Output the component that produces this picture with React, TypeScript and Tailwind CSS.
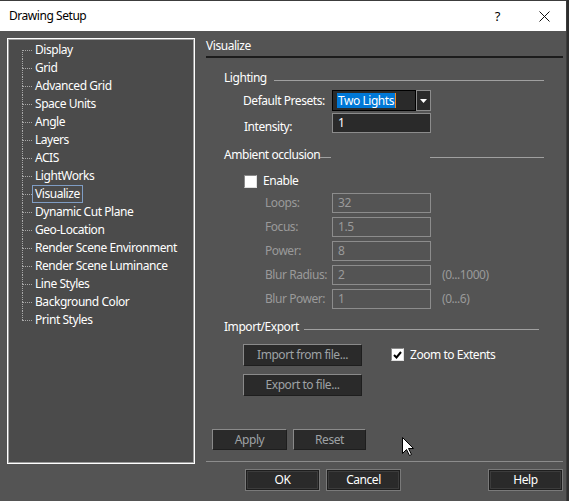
import React from "react";

const treeItems = [
  "Display",
  "Grid",
  "Advanced Grid",
  "Space Units",
  "Angle",
  "Layers",
  "ACIS",
  "LightWorks",
  "Visualize",
  "Dynamic Cut Plane",
  "Geo-Location",
  "Render Scene Environment",
  "Render Scene Luminance",
  "Line Styles",
  "Background Color",
  "Print Styles",
];

function TreeRow({ label, first, last, selected }: { label: string; first: boolean; last: boolean; selected: boolean }) {
  return (
    <div className="flex h-[18px] items-center">
      <div className="flex h-[18px] w-[10px] flex-col">
        <div className={`h-[9px] ${first ? "" : "border-l border-dotted border-[#a8a8a8]"}`} />
        <div
          className={`h-[9px] border-t border-dotted border-[#a8a8a8] ${last ? "" : "border-l"}`}
        />
      </div>
      <span
        className={`flex h-[18px] items-center border px-[2px] leading-none ${
          selected ? "border-[#7f9dc4]" : "border-transparent"
        }`}
      >
        {label}
      </span>
    </div>
  );
}

function Field({ value, disabled }: { value: string; disabled?: boolean }) {
  return (
    <div
      className={`flex h-[20px] w-[99px] items-center border border-[#8c8c8c] pl-[5px] ${
        disabled ? "bg-[#545454] text-[#9a9a9a]" : "bg-[#2a2a2a] text-white"
      }`}
    >
      {value}
    </div>
  );
}

function Btn({ label, w, dim, h = "h-[22px]" }: { label: string; w: string; dim?: boolean; h?: string }) {
  return (
    <div
      className={`flex ${h} ${w} items-center justify-center border border-t-[#8a8a8a] border-l-[#8a8a8a] border-r-[#1e1e1e] border-b-[#1e1e1e] bg-[#2a2a2a] ${
        dim ? "text-[#9ea2a5]" : "text-white"
      }`}
    >
      {label}
    </div>
  );
}

function MainBtn({ label, className = "" }: { label: string; className?: string }) {
  return (
    <div
      className={`flex h-[22px] w-[75px] items-center justify-center border border-[#7a7a7a] bg-[#1e1e1e] p-px text-white ${className}`}
    >
      <div className="flex h-full w-full items-center justify-center border border-[#3c3c3c] bg-[#2a2a2a]">
        {label}
      </div>
    </div>
  );
}

function RangeRow({ label, value, range }: { label: string; value: string; range?: string }) {
  return (
    <div className="mt-[4px] flex h-[20px] items-center pl-[59px]">
      <span className="w-[67px] text-[#9a9a9a]">{label}</span>
      <Field value={value} disabled />
      {range && <span className="ml-[11px] text-[#9a9a9a]">{range}</span>}
    </div>
  );
}

export default function App() {
  return (
    <div className="relative h-[501px] w-[569px] overflow-hidden whitespace-nowrap bg-[#2e2e2e] font-['Noto_Sans',sans-serif] text-[12px] leading-none tracking-[-0.45px]">
      <div className="flex h-[501px] w-[567px] flex-col border-t border-r border-[#3c3c3c] bg-[#545454]">
        {/* title bar */}
        <div className="flex h-[30px] items-center bg-white pl-[9px] text-black">
          <span>Drawing Setup</span>
          <span className="ml-auto mr-[39px] text-[13px]">?</span>
          <svg width="11" height="11" viewBox="0 0 11 11" className="mr-[16px]">
            <path d="M0.5 0.5 L10.5 10.5 M10.5 0.5 L0.5 10.5" stroke="#111" strokeWidth="1" />
          </svg>
        </div>

        <div className="flex pl-[7px] pt-[7px]">
          {/* tree */}
          <div className="h-[426px] w-[188px] border border-white bg-[#4b4b4b] text-white shadow-[inset_0_0_0_1px_#9c9c9c]">
            <div className="pl-[14px] pt-[2px]">
              {treeItems.map((t, i) => (
                <TreeRow
                  key={t}
                  label={t}
                  first={i === 0}
                  last={i === treeItems.length - 1}
                  selected={t === "Visualize"}
                />
              ))}
            </div>
          </div>

          {/* content */}
          <div className="ml-[11px] flex w-[357px] flex-col text-white">
            <div className="flex h-[16px] items-center">Visualize</div>
            <div className="mt-[2px] h-[2px] bg-[#1c1c1c]" />

            <div className="mt-[12px] mr-[19px] flex h-[16px] items-center pl-[18px]">
              <span>Lighting</span>
              <div className="ml-[7px] mt-[5px] h-px flex-1 bg-[#a0a0a0]" />
            </div>

            <div className="mt-[4px] flex h-[21px] items-center pl-[37px]">
              <span className="w-[89px]">Default Presets:</span>
              <div className="flex h-[21px] w-[84px] items-center border border-black bg-[#2a2a2a] pl-[4px]">
                <span className="flex h-[15px] items-center border-r border-[#f08a24] bg-[#0078d7] px-px">Two Lights</span>
              </div>
              <div className="flex h-[21px] w-[15px] items-center justify-center border border-[#8c8c8c] bg-[#2a2a2a]">
                <svg width="7" height="4" viewBox="0 0 7 4">
                  <path d="M0 0 H7 L3.5 4 Z" fill="#fff" />
                </svg>
              </div>
            </div>

            <div className="mt-[2px] flex h-[20px] items-center pl-[38px]">
              <span className="w-[88px] pt-[7px]">Intensity:</span>
              <Field value="1" />
            </div>

            <div className="mt-[14px] mr-[19px] flex h-[16px] items-center pl-[18px]">
              <span>Ambient occlusion</span>
              <div className="mt-[4px] h-px w-[11px] bg-[#a0a0a0]" />
              <div className="ml-[99px] mt-[4px] h-px flex-1 bg-[#a0a0a0]" />
            </div>

            <div className="mt-[10px] flex h-[16px] items-center pl-[38px]">
              <div className="h-[13px] w-[13px] border border-t-[#8a8a8a] border-l-[#8a8a8a] border-r-[#e0e0e0] border-b-[#e0e0e0] bg-white" />
              <span className="ml-[6px]">Enable</span>
            </div>

            <RangeRow label="Loops:" value="32" />
            <RangeRow label="Focus:" value="1.5" />
            <RangeRow label="Power:" value="8" />
            <RangeRow label="Blur Radius:" value="2" range="(0...1000)" />
            <RangeRow label="Blur Power:" value="1" range="(0...6)" />

            <div className="mt-[10px] mr-[24px] flex h-[16px] items-center pl-[18px]">
              <span>Import/Export</span>
              <div className="ml-[5px] mt-[4px] h-px flex-1 bg-[#a0a0a0]" />
            </div>

            <div className="mt-[9px] flex items-start pl-[37px]">
              <Btn label="Import from file..." w="w-[119px]" dim />
              <div className="ml-[29px] mt-[4px] flex items-center">
                <div className="flex h-[13px] w-[13px] items-center justify-center border border-t-[#8a8a8a] border-l-[#8a8a8a] border-r-[#e0e0e0] border-b-[#e0e0e0] bg-white">
                  <svg width="9" height="8" viewBox="0 0 9 8">
                    <path d="M1 4 L3.5 6.5 L8 1" stroke="#000" strokeWidth="2" fill="none" />
                  </svg>
                </div>
                <span className="ml-[6px]">Zoom to Extents</span>
              </div>
            </div>
            <div className="mt-[8px] pl-[37px]">
              <Btn label="Export to file..." w="w-[119px]" dim />
            </div>

            <div className="mt-[33px] flex pl-[6px]">
              <Btn label="Apply" w="w-[75px]" h="h-[21px]" dim />
              <div className="ml-[6px]">
                <Btn label="Reset" w="w-[73px]" h="h-[21px]" dim />
              </div>
            </div>

            <div className="mt-[11px] h-px bg-[#8c8c8c]" />

            <div className="mt-[7px] flex pl-[39px]">
              <MainBtn label="OK" />
              <MainBtn label="Cancel" className="ml-[6px]" />
              <MainBtn label="Help" className="ml-auto" />
            </div>
          </div>
        </div>
      </div>

      {/* mouse pointer */}
      <svg className="absolute left-[402px] top-[437px]" width="13" height="20" viewBox="0 0 13 20">
        <path
          d="M0.5 0.5 L0.5 16.5 L4.5 12.5 L7.5 18.5 L9.5 17.5 L6.5 11.5 L11.5 11.5 Z"
          fill="#fff"
          stroke="#000"
          strokeWidth="1"
        />
      </svg>
    </div>
  );
}
